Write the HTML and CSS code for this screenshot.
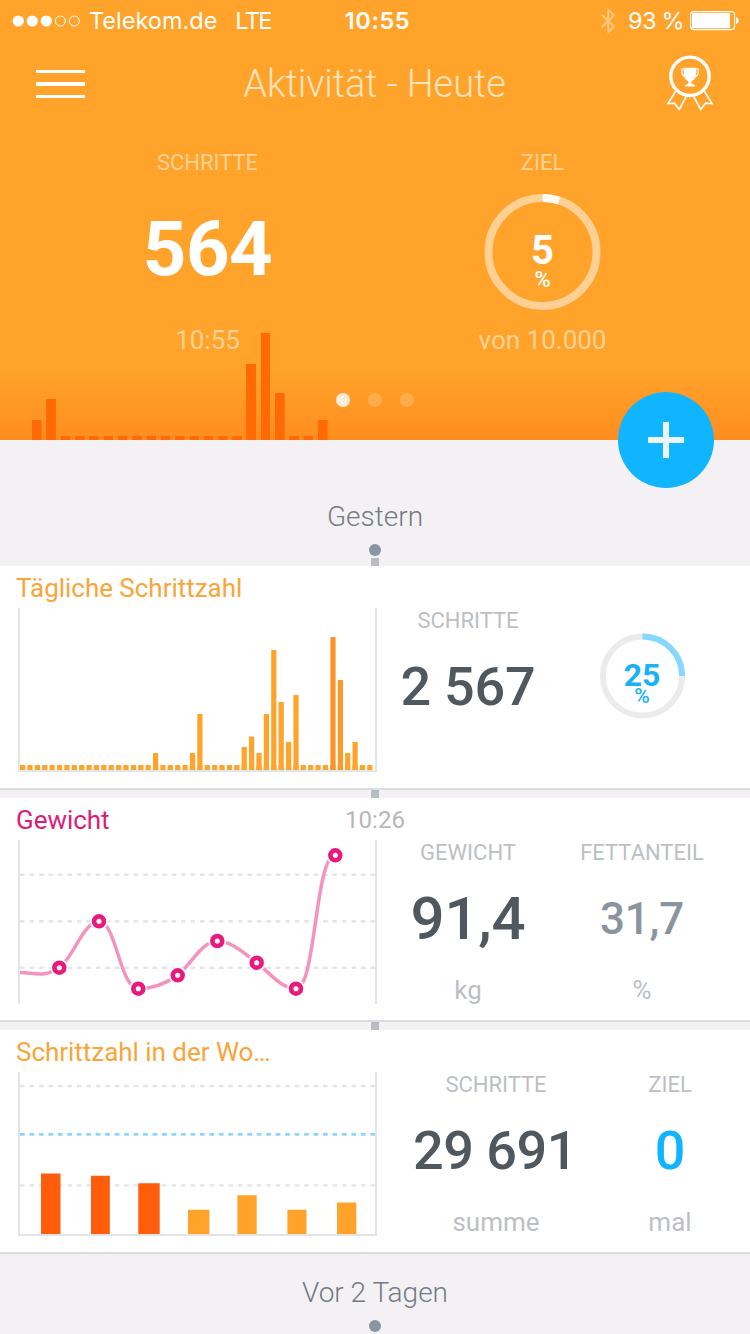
FILE: index.html
```html
<!DOCTYPE html>
<html lang="de">
<head>
<meta charset="utf-8">
<title>Aktivität - Heute</title>
<link rel="stylesheet" href="styles.css">
</head>
<body>
<main class="app">
  <header class="hero">
    <div class="status">
      <div class="status-left">
        <svg class="signal" width="69" height="12" viewBox="0 0 69 12">
          <g fill="#fff"><circle cx="6.3" cy="6" r="5.6"/><circle cx="20.3" cy="6" r="5.6"/><circle cx="34.3" cy="6" r="5.6"/></g>
          <g fill="none" stroke="#fff"><circle cx="48.3" cy="6" r="5"/><circle cx="62.3" cy="6" r="5"/></g>
        </svg>
        <span class="carrier">Telekom.de</span>
        <span class="network">LTE</span>
      </div>
      <span class="clock">10:55</span>
      <div class="status-right">
        <svg class="bluetooth" width="16" height="28" viewBox="0 0 16 28"><path d="M1.5 7.5 14 19.5 8.2 25.5V2.5L14 8.5 1.5 20.5" fill="none" stroke="#fff" stroke-width="1.9"/></svg>
        <span class="charge">93 %</span>
        <svg class="battery" width="50" height="20" viewBox="0 0 50 20"><rect x=".6" y=".6" width="44" height="18" rx="3" fill="none" stroke="#fff" stroke-width="1.1"/><rect x="2" y="2" width="38" height="15.2" rx="1.3" fill="#fff"/><path d="M46 6.2c3.6.6 3.6 6.200 0 6.800z" fill="#fff"/></svg>
      </div>
    </div>
    <nav class="nav">
      <div class="menu"><i></i><i></i><i></i></div>
      <h1 class="title">Aktivität - Heute</h1>
      <svg class="award" width="50" height="60" viewBox="665 54 50 60">
        <g fill="none" stroke="#fff">
          <circle cx="690" cy="76.300" r="19.200" stroke-width="3.400"/>
          <path d="M675.500 91.500 668 103.700 674.500 103.200 679.300 109.500 686.300 96.500M704.500 91.500 712 103.700 705.500 103.200 700.700 109.500 693.700 96.500" stroke-width="1.600"/>
          <path d="M684 69h-2.200v3.500q0 3.400 3.700 4.200M696 69h2.200v3.500q0 3.400-3.700 4.200" stroke-width="1.200"/>
        </g>
        <path d="M683.700 67.800h12.600v6.200q0 5.400-4.700 7.200v2.300l3.200 1.500v1.500h-9.600V85l3.200-1.500v-2.300q-4.700-1.800-4.700-7.200z" fill="#fff"/>
      </svg>
    </nav>
    <section class="today">
      <div class="today-col">
        <span class="label">SCHRITTE</span>
        <strong class="steps">564</strong>
        <span class="sub">10:55</span>
      </div>
      <div class="today-col">
        <span class="label">ZIEL</span>
        <div class="ring ring-big">
          <svg width="118" height="118" viewBox="-58.500 -59 118 118"><circle r="54" fill="none" stroke="#ffd093" stroke-width="8"/><circle r="54" fill="none" stroke="#fffaf2" stroke-width="8" pathLength="100" stroke-dasharray="5 95" transform="rotate(-90)"/></svg>
          <div class="ring-text"><b>5</b><small>%</small></div>
        </div>
        <span class="sub">von 10.000</span>
      </div>
    </section>
    <svg class="hero-chart" width="300" height="108" viewBox="0 0 300 108" fill="#ff6a05">
      <path d="M0 88h9.600v20H0zM14.100 67h9.800v41h-9.800zM214.100 32h9.900v76h-9.900zM229 1h9v107h-9zM243 61h9.700v47H243zM286 88h9.600v20H286z"/>
      <path d="M28.700 106H210" fill="none" stroke="#ff6a05" stroke-width="4" stroke-dasharray="9.500 4.800"/>
      <path d="M257 104h10v4h-10zM271.500 104h9.500v4h-9.500z"/>
    </svg>
    <div class="pager"><i class="on"></i><i></i><i></i></div>
    <div class="add"><svg width="36" height="36" viewBox="0 0 36 36"><path d="M15 0h6v15h15v6H21v15h-6V21H0v-6h15z" fill="#ecf5f7"/></svg></div>
  </header>

  <section class="day day-first"><h2>Gestern</h2><i class="day-dot"></i><i class="link"></i></section>

  <article class="card">
    <div class="card-head"><h3 class="orange">Tägliche Schrittzahl</h3></div>
    <div class="card-body">
      <svg class="chart" width="359" height="164" viewBox="18 42 359 164">
        <path d="M19 42V205H376V42" fill="none" stroke="#e2e4e6" stroke-width="2"/>
        <path d="M20 201.500H372.500" stroke="#ffa32b" stroke-width="5" stroke-dasharray="5.200 2.187"/>
        <g stroke="#ffa32b" stroke-width="5.200">
          <path d="M155.600 204v-17M192.500 204v-17M199.900 204v-56M244.200 204v-23M251.600 204v-33.500M259 204v-17M266.400 204v-56M273.800 204v-120M281.200 204v-68M288.600 204v-28M296 204v-75M347.700 204v-17M355.100 204v-28"/>
          <path d="M333 204V71" stroke="#fb922a"/><path d="M340.400 204v-90" stroke="#fc992b"/>
        </g>
      </svg>
      <div class="metric">
        <span class="label">SCHRITTE</span><strong class="number">2 567</strong>
      </div>
      <div class="metric">
        <div class="ring ring-small">
          <svg width="86" height="86" viewBox="-43.500 -43 86 86"><circle r="39.600" fill="none" stroke="#ebebeb" stroke-width="6"/><path d="M0-39.600A39.600 39.600 0 0 1 39.600 0" fill="none" stroke="#87d8ff" stroke-width="6"/></svg>
          <div class="ring-text"><b>25</b><small>%</small></div>
        </div>
      </div>
    </div>
  </article>
  <i class="link"></i>

  <article class="card">
    <div class="card-head"><h3 class="pink">Gewicht</h3><time>10:26</time></div>
    <div class="card-body">
      <svg class="chart" width="359" height="164" viewBox="18 42 359 164">
        <path d="M20 76.700H375M20 123.300H375M20 169.700H375" stroke="#e5e5e8" stroke-width="2.500" stroke-dasharray="4.700 4.770"/>
        <path d="M19 42V206M376 42V206" stroke="#e2e4e6" stroke-width="2"/>
        <path d="M20 174.500C33 174.500 45 180 59.300 169.700C73 160 84 123.300 99 123.300C116 123.300 120 190.700 138.300 190.700C152 190.700 164 187 177.700 177.300C190 168 202 143 217.300 143C231 143 244 155 256.700 164.700C270 175 281 190.700 296 190.700C316 190.700 315 57.300 335.300 57.300" fill="none" stroke="#f493bf" stroke-width="3.500"/>
        <g fill="#fff"><circle cx="59.300" cy="169.700" r="9"/><circle cx="99" cy="123.300" r="9"/><circle cx="138.300" cy="190.700" r="9"/><circle cx="177.700" cy="177.300" r="9"/><circle cx="217.300" cy="143" r="9"/><circle cx="256.700" cy="164.700" r="9"/><circle cx="296" cy="190.700" r="9"/><circle cx="335.300" cy="57.300" r="9"/></g>
        <g fill="#fff" stroke="#e91a7d" stroke-width="4.700"><circle cx="59.300" cy="169.700" r="4.900"/><circle cx="99" cy="123.300" r="4.900"/><circle cx="138.300" cy="190.700" r="4.900"/><circle cx="177.700" cy="177.300" r="4.900"/><circle cx="217.300" cy="143" r="4.900"/><circle cx="256.700" cy="164.700" r="4.900"/><circle cx="296" cy="190.700" r="4.900"/><circle cx="335.300" cy="57.300" r="4.900"/></g>
      </svg>
      <div class="metric"><span class="label">GEWICHT</span><strong class="number number-large">91,4</strong><span class="sub">kg</span></div>
      <div class="metric"><span class="label">FETTANTEIL</span><strong class="number number-muted">31,7</strong><span class="sub">%</span></div>
    </div>
  </article>
  <i class="link"></i>

  <article class="card">
    <div class="card-head"><h3 class="orange">Schrittzahl in der Wo…</h3></div>
    <div class="card-body">
      <svg class="chart" width="359" height="164" viewBox="18 42 359 164">
        <path d="M20 56H375M20 155.300H375" stroke="#e5e5e8" stroke-width="2.300" stroke-dasharray="4.700 4.770"/>
        <path d="M20 104.400H375" stroke="#8ad7f8" stroke-width="2.700" stroke-dasharray="4.700 4.770"/>
        <path d="M19 42V205H376V42" fill="none" stroke="#e2e4e6" stroke-width="2"/>
        <path d="M41 143.500h19.500V204H41zM91 145.800h18.800V204H91zM138.300 153.200h21.400V204h-21.400z" fill="#ff5c0b"/>
        <path d="M188 179.700h21.400V204H188zM237.400 165.300h19.300V204h-19.300zM287.400 179.700h19.100V204h-19.100zM337 172.500h19.300V204H337z" fill="#ffa32b"/>
      </svg>
      <div class="metric metric-wide"><span class="label">SCHRITTE</span><strong class="number">29 691</strong><span class="sub">summe</span></div>
      <div class="metric metric-narrow"><span class="label">ZIEL</span><strong class="number number-blue">0</strong><span class="sub">mal</span></div>
    </div>
  </article>

  <section class="day"><h2>Vor 2 Tagen</h2><i class="day-dot"></i></section>
</main>
</body>
</html>
```
FILE: styles.css
```css
* { box-sizing: border-box; margin: 0; padding: 0; }
body { background: #f3f1f3; font-family: Roboto, sans-serif; overflow: hidden; }
i { display: block; }
svg { display: block; flex: none; }
.app { width: 750px; height: 1334px; overflow: hidden; }

.hero {
  position: relative;
  height: 440px;
  background: linear-gradient(#ffa32b 0, #ffa32b 370px, #ff8d1f 440px);
  color: #fff;
}

.status {
  display: grid;
  grid-template-columns: 1fr auto 1fr;
  align-items: center;
  height: 40px;
  padding: 1px 10px 0 12px;
  font: 400 23.5px/40px Inter, sans-serif;
}
.status-left, .status-right { display: flex; align-items: center; white-space: pre; }
.status-right { justify-content: flex-end; }
.carrier { margin-left: 8px; }
.network { margin-left: 18px; letter-spacing: -1.7px; }
.clock { margin-left: 3px; font-weight: 600; letter-spacing: .6px; }
.bluetooth { margin-right: 12px; opacity: .42; }
.charge { margin-right: 6px; letter-spacing: -.7px; }

.nav {
  display: grid;
  grid-template-columns: 50px 1fr 50px;
  align-items: center;
  height: 87px;
  padding: 0 35px;
}
.menu { display: flex; flex-direction: column; gap: 9px; padding: 1px 0 0 1px; }
.menu i { width: 49px; height: 3.5px; background: #fff; }
.title { margin-left: -1px; text-align: center; font-size: 38px; font-weight: 300; line-height: 44px; letter-spacing: -.06px; color: #ffe4bf; }

.today { display: grid; grid-template-columns: 335px 335px; justify-content: center; padding-top: 23px; }
.today-col { display: grid; grid-template-rows: 24px 148px 36px; justify-items: center; align-items: center; }
.label { font-size: 22px; line-height: 24px; padding-top: 2px; }
.sub { font-size: 26px; line-height: 36px; }
.today .label, .today .sub { color: #ffd295; }
.steps { font-size: 76px; line-height: 76px; font-weight: 700; padding-top: 2px; letter-spacing: -.4px; }

.ring { display: grid; place-items: center; }
.ring > * { grid-area: 1 / 1; }
.ring-text { display: flex; flex-direction: column; align-items: center; }
.ring-big { padding-top: 8px; }
.ring-big b { font-size: 40px; line-height: 34px; }
.ring-big small { font-size: 22px; line-height: 24px; font-weight: 500; }
.ring-big .ring-text { padding-top: 22px; }

.hero-chart { position: absolute; left: 32px; bottom: 0; }
.pager { position: absolute; left: 336px; top: 393px; display: flex; gap: 18px; }
.pager i { width: 14px; height: 14px; border-radius: 50%; background: #ffad4b; }
.pager .on { background: #ffeddc; }
.add {
  position: absolute;
  right: 36px;
  bottom: -48px;
  display: grid;
  place-items: center;
  width: 96px;
  height: 96px;
  border-radius: 50%;
  background: #10b4ff;
}

.day { display: flex; flex-direction: column; align-items: center; padding-top: 21px; }
.day-first { height: 126px; padding-top: 59px; }
.day h2 { font-size: 28px; line-height: 36px; font-weight: 300; color: #747b83; }
.day-dot { width: 12px; height: 12px; margin-top: 9px; border-radius: 50%; background: #8995a2; }
.link { width: 8px; height: 8px; margin: 0 auto; background: #b8bdc4; }
.day .link { margin-top: 2px; }

.card { height: 224px; background: #fff; border-bottom: 2px solid #dddddf; }
.card-head {
  display: grid;
  grid-template-columns: 1fr auto 1fr;
  align-items: center;
  height: 42px;
  padding: 2px 16px 0;
}
.card-head h3 { font-size: 26px; line-height: 36px; font-weight: 400; white-space: nowrap; letter-spacing: -.03px; }
.card-head time { font-size: 24px; color: #b7b7b7; }
.orange { color: #f9a53a; }
.pink { color: #dc1d78; }
.card-body { display: flex; padding-left: 18px; }
.chart { margin-right: 4px; }
.metric {
  display: grid;
  grid-template-rows: 24px 108px 36px;
  justify-items: center;
  align-items: center;
  width: 174px;
  color: #bbbfc5;
}
.metric-wide { width: 230px; }
.metric-narrow { width: 118px; }
.number { font-size: 54px; font-weight: 500; line-height: 60px; letter-spacing: -.2px; padding-top: 2px; color: #50585f; }
.metric-wide .number { letter-spacing: -.5px; margin-left: -2px; }
.number-large { font-size: 60px; }
.number-muted { font-size: 44px; color: #8a949f; }
.number-blue { color: #10b4ff; }
.ring-small { grid-row: 1 / 4; color: #19b1f8; margin-top: -32px; }
.ring-small b { font-size: 32px; line-height: 26px; }
.ring-small small { font-size: 21px; line-height: 16px; font-weight: 500; }
.ring-small .ring-text { padding-top: 13px; }
```
